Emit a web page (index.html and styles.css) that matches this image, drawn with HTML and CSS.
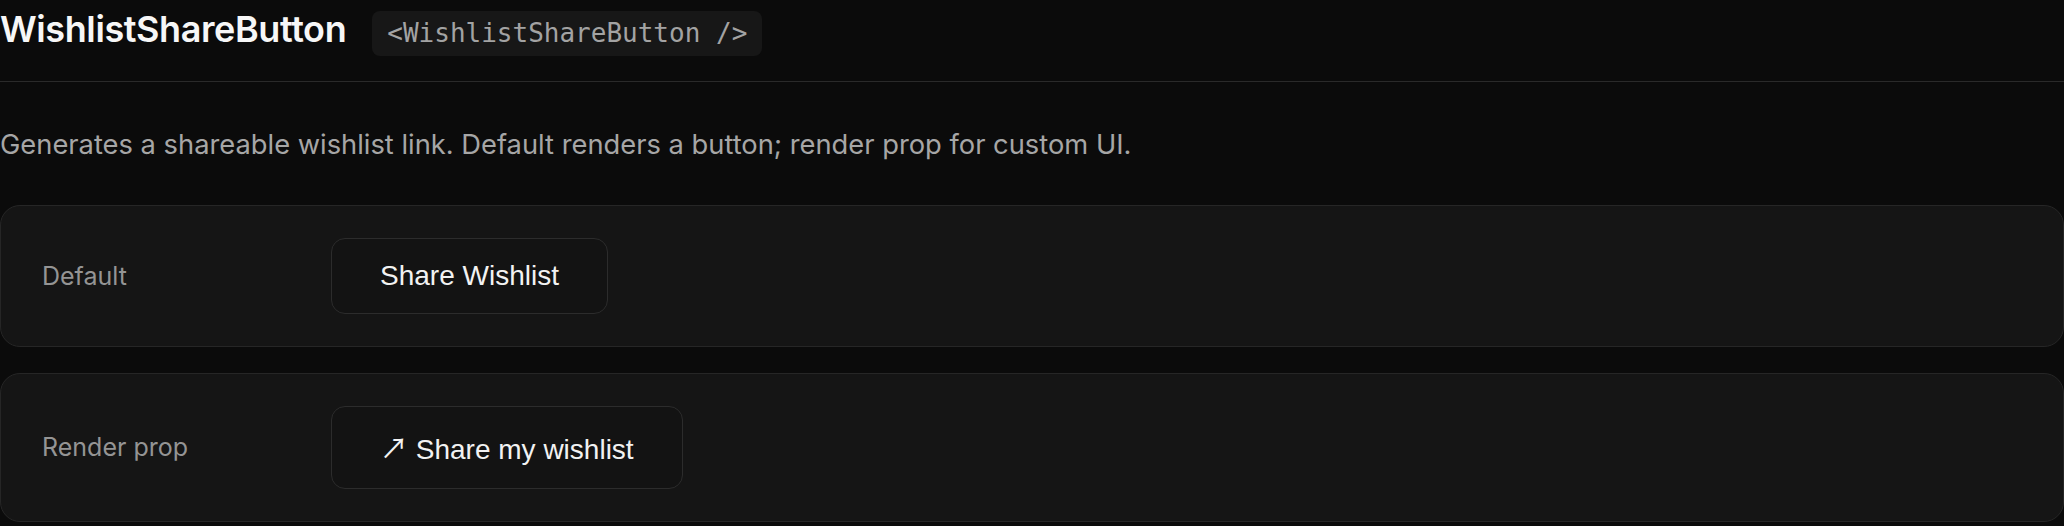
FILE: index.html
```html
<!DOCTYPE html>
<html lang="en">
<head>
<meta charset="utf-8">
<title>WishlistShareButton</title>
<link rel="stylesheet" href="styles.css">
</head>
<body>
<main class="page">
  <header class="header">
    <h1 class="title">WishlistShareButton</h1>
    <code class="badge">&lt;WishlistShareButton /&gt;</code>
  </header>
  <p class="desc">Generates a shareable wishlist link. Default renders a button; render prop for custom UI.</p>
  <section class="cards">
    <div class="card">
      <div class="label">Default</div>
      <div class="demo"><button class="btn" type="button">Share Wishlist</button></div>
    </div>
    <div class="card">
      <div class="label">Render prop</div>
      <div class="demo"><button class="btn" type="button"><span class="arrow">↗</span> Share my wishlist</button></div>
    </div>
  </section>
</main>
</body>
</html>
```
FILE: styles.css
```css
* { box-sizing: border-box; }
html, body { margin: 0; padding: 0; background: #0b0b0b; }
body { font-family: "Inter", "Liberation Sans", sans-serif; color: #f2f2f2; }
.page { padding-top: 8px; }
.header {
  display: flex;
  align-items: baseline;
  gap: 26px;
  padding-bottom: 25px;
  border-bottom: 1px solid #2a2a2a;
}
.title {
  margin: 0;
  font-size: 36px;
  line-height: 43px;
  font-weight: 600;
  letter-spacing: -0.4px;
  color: #f7f7f7;
}
.badge {
  font-family: "DejaVu Sans Mono", "Liberation Mono", monospace;
  font-size: 26px;
  line-height: 30px;
  padding: 7.5px 15px;
  background: #171717;
  color: #a3a3a3;
  border-radius: 8px;
}
.desc {
  margin: 43px 0 41px;
  font-size: 27.3px;
  line-height: 39px;
  color: #a6a6a6;
}
.cards { display: flex; flex-direction: column; gap: 26px; }
.card {
  display: grid;
  grid-template-columns: 257px 1fr;
  column-gap: 32px;
  align-items: center;
  padding: 32px 40px 32px 41px;
  background: #151515;
  border: 1px solid #262626;
  border-radius: 20px;
}
.label { font-size: 25px; color: #949494; }
.demo { display: flex; }
.btn {
  font-family: "Liberation Sans", Arial, sans-serif;
  font-size: 28px;
  padding: 21px 48px;
  background: #131313;
  color: #f2f2f2;
  border: 1px solid #2c2c2c;
  border-radius: 14px;
}
.arrow { font-family: "Noto Sans CJK JP", "DejaVu Sans", sans-serif; line-height: 39px; }
```
